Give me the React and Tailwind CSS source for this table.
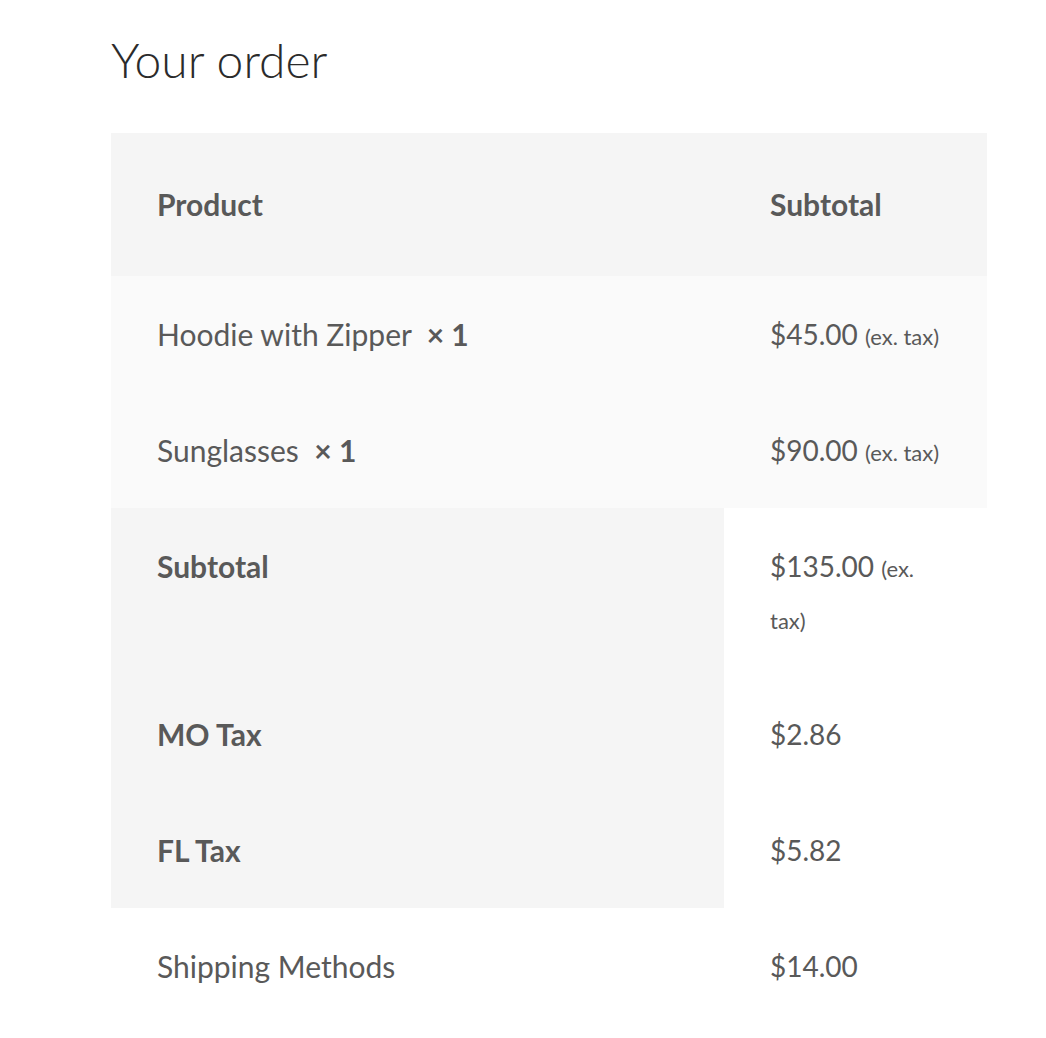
export default function App() {
  const td = "py-[32px] px-[46px] leading-[52px] text-left align-top";
  const price = td + " text-[28px]";
  return (
    <div className="min-h-[1038px] w-[1046px] bg-white font-['Lato',sans-serif] text-[#595959]">
      <div className="pl-[111px] pr-[59px]">
        <h2 className="pt-[30px] pb-[44px] text-[48px] leading-[59px] font-light text-[#2b2b2b]">Your order</h2>
        <table className="w-[876px] border-collapse text-[30px] table-fixed">
          <colgroup>
            <col className="w-[613px]" />
            <col className="w-[263px]" />
          </colgroup>
          <thead>
            <tr className="bg-[#f5f5f5]">
              <th className="pt-[45px] pb-[46px] px-[46px] leading-[52px] text-left font-bold">Product</th>
              <th className="pt-[45px] pb-[46px] px-[46px] leading-[52px] text-left font-bold">Subtotal</th>
            </tr>
          </thead>
          <tbody className="bg-[#fafafa]">
            <tr>
              <td className={td}>
                Hoodie with Zipper&nbsp; <strong className="font-bold">×&nbsp;1</strong>
              </td>
              <td className={price + " whitespace-nowrap"}>
                $45.00 <span className="text-[22px] leading-none">(ex. tax)</span>
              </td>
            </tr>
            <tr>
              <td className={td}>
                Sunglasses&nbsp; <strong className="font-bold">×&nbsp;1</strong>
              </td>
              <td className={price + " whitespace-nowrap"}>
                $90.00 <span className="text-[22px] leading-none">(ex. tax)</span>
              </td>
            </tr>
          </tbody>
          <tfoot>
            <tr>
              <th className={td + " bg-[#f5f5f5] font-bold"}>Subtotal</th>
              <td className={price + " bg-white"}>
                $135.00 <span className="text-[22px] leading-none">(ex.<br />tax)</span>
              </td>
            </tr>
            <tr>
              <th className={td + " bg-[#f5f5f5] font-bold"}>MO Tax</th>
              <td className={price + " bg-white"}>$2.86</td>
            </tr>
            <tr>
              <th className={td + " bg-[#f5f5f5] font-bold"}>FL Tax</th>
              <td className={price + " bg-white"}>$5.82</td>
            </tr>
            <tr>
              <th className={td + " bg-white font-normal"}>Shipping Methods</th>
              <td className={price + " bg-white"}>$14.00</td>
            </tr>
          </tfoot>
        </table>
      </div>
    </div>
  );
}
